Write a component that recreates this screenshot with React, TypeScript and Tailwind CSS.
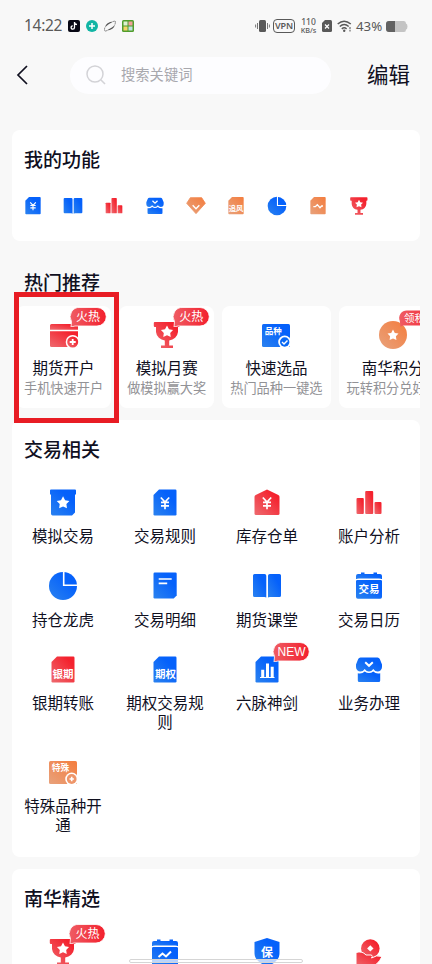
import React from "react";

type IconName =
  | "yenDoc" | "book" | "bars" | "shop" | "gem" | "zhuifeng" | "pie" | "wave" | "cup"
  | "wallet" | "pinzhong" | "coin" | "starBox" | "house" | "detail" | "calendar"
  | "yinqi" | "qiquan" | "chartDoc" | "teshu" | "trendCalendar" | "shield" | "hand";

type Item = {
  icon: IconName;
  label: string;
  badge?: string;
};

const STAR = "M15 9.6l1.8 3.3 3.7.7-2.6 2.7.5 3.7-3.4-1.6-3.4 1.6.5-3.7-2.6-2.7 3.7-.7z";
const DOC = "M9 1.5H25.3a1.2 1.2 0 0 1 1.2 1.2V26.3a1.2 1.2 0 0 1-1.2 1.2H4.7a1.2 1.2 0 0 1-1.2-1.2V7z";

const myItems: IconName[] = ["yenDoc", "book", "bars", "shop", "gem", "zhuifeng", "pie", "wave", "cup"];

const hotItems: (Item & { desc: string })[] = [
  { icon: "wallet", label: "期货开户", desc: "手机快速开户", badge: "火热" },
  { icon: "cup", label: "模拟月赛", desc: "做模拟赢大奖", badge: "火热" },
  { icon: "pinzhong", label: "快速选品", desc: "热门品种一键选" },
  { icon: "coin", label: "南华积分", desc: "玩转积分兑好礼", badge: "领积分" },
];

const tradeItems: Item[] = [
  { icon: "starBox", label: "模拟交易" },
  { icon: "yenDoc", label: "交易规则" },
  { icon: "house", label: "库存仓单" },
  { icon: "bars", label: "账户分析" },
  { icon: "pie", label: "持仓龙虎" },
  { icon: "detail", label: "交易明细" },
  { icon: "book", label: "期货课堂" },
  { icon: "calendar", label: "交易日历" },
  { icon: "yinqi", label: "银期转账" },
  { icon: "qiquan", label: "期权交易规则" },
  { icon: "chartDoc", label: "六脉神剑", badge: "NEW" },
  { icon: "shop", label: "业务办理" },
  { icon: "teshu", label: "特殊品种开通" },
];

// only the icons of this row are above the fold
const pickItems: Item[] = [
  { icon: "cup", label: "", badge: "火热" },
  { icon: "trendCalendar", label: "" },
  { icon: "shield", label: "" },
  { icon: "hand", label: "" },
];

const Gradients = () => (
  <svg className="absolute h-0 w-0">
    <defs>
      <linearGradient id="blue" x1="1" y1="0" x2="0" y2="1">
        <stop offset="0.3" stopColor="#0561fb" />
        <stop offset="1" stopColor="#2b82ef" />
      </linearGradient>
      <linearGradient id="red" x1="1" y1="0" x2="0" y2="1">
        <stop offset="0.2" stopColor="#f4222e" />
        <stop offset="1" stopColor="#ee6a6f" />
      </linearGradient>
      <linearGradient id="orange" x1="1" y1="0" x2="0" y2="1">
        <stop offset="0.1" stopColor="#f38043" />
        <stop offset="1" stopColor="#e8a27c" />
      </linearGradient>
      <linearGradient id="badge" x1="0" y1="0" x2="1" y2="0">
        <stop offset="0" stopColor="#ef5c64" />
        <stop offset="1" stopColor="#f3202d" />
      </linearGradient>
    </defs>
  </svg>
);

const Yen = () => (
  <path d="M10.8 9.5L15 14l4.2-4.5M11 14.3h8M11 17.8h8M15 14v7.2" fill="none" stroke="#fff" strokeWidth="1.7" />
);

const IconText = ({ x = 15, y, size = 10, children }: { x?: number; y: number; size?: number; children: string }) => (
  <text x={x} y={y} fontSize={size} fontWeight="700" fill="#fff" textAnchor="middle">{children}</text>
);

const CalendarBody = () => (
  <>
    <path d="M2 8V5a2 2 0 0 1 2-2h3V1.5h3.5V3h9V1.5H23V3h3a2 2 0 0 1 2 2v3z" fill="url(#blue)" />
    <path d="M2 9H28V26a1.8 1.8 0 0 1-1.8 1.8H3.8A1.8 1.8 0 0 1 2 26z" fill="url(#blue)" />
    <path d="M2 9.3q1-1.3 2.5-1.3h21q1.5 0 2.5 1.3" fill="none" stroke="#fff" />
  </>
);

const shapes: Record<IconName, React.ReactNode> = {
  yenDoc: <><path d={DOC} fill="url(#blue)" /><Yen /></>,
  book: (
    <>
      <path d="M2.5 3H12.5a1.8 1.8 0 0 1 1.8 1.8V26.5L12.5 26H2.5A1.5 1.5 0 0 1 1 24.5V4.5A1.5 1.5 0 0 1 2.5 3z" fill="url(#blue)" />
      <path d="M27.5 3H17.8a1.8 1.8 0 0 0-1.8 1.8V26.5l1.8-.5h9.7a1.5 1.5 0 0 0 1.5-1.5V4.5A1.5 1.5 0 0 0 27.5 3z" fill="url(#blue)" />
    </>
  ),
  bars: (
    <>
      <rect x="2.5" y="10" width="7.3" height="16" rx="1" fill="url(#red)" />
      <rect x="11.2" y="3" width="8" height="23" rx="1" fill="url(#red)" />
      <rect x="20.5" y="14" width="7" height="12" rx="1" fill="url(#red)" />
    </>
  ),
  shop: (
    <>
      <path d="M6.5 2.5h17a2.5 2.5 0 0 1 2.3 1.5L28 9.5v2.500a4.5 4.5 0 0 1-4.5 4.5q-2.5 0-4.2-2.5-1.8 2.5-4.3 2.5T10.7 14q-1.7 2.5-4.2 2.5A4.5 4.5 0 0 1 2 12V9.5L4.2 4a2.5 2.5 0 0 1 2.3-1.5z" fill="url(#blue)" />
      <path d="M3.8 18.2q4.2 1 6.9-1.8 4.3 3.2 8.6 0 2.7 2.8 6.9 1.8v7.3a1.5 1.5 0 0 1-1.5 1.5H5.3a1.5 1.5 0 0 1-1.5-1.5z" fill="url(#blue)" />
      <path d="M11.2 7.2l3.8 3.6 3.8-3.6" fill="none" stroke="#fff" strokeWidth="2" />
    </>
  ),
  gem: (
    <>
      <path d="M6.5 2.5h17L29 11 15 26.5 1 11z" fill="url(#orange)" stroke="url(#orange)" strokeWidth="1.2" strokeLinejoin="round" />
      <path d="M10 14l5 5 5-5" fill="none" stroke="#fff" strokeWidth="2.2" />
    </>
  ),
  zhuifeng: <><path d={DOC} fill="url(#orange)" /><IconText y={23} size={11}>追风</IconText></>,
  pie: (
    <>
      <circle cx="15" cy="15" r="14" fill="url(#blue)" />
      <path d="M15.7 0v14.3H30" fill="none" stroke="#fff" strokeWidth="1.6" />
    </>
  ),
  wave: (
    <>
      <path d={DOC} fill="url(#orange)" />
      <path d="M8 16h3l3-3 4 4.5 2.5-2.5h2" fill="none" stroke="#fff" strokeWidth="2" />
    </>
  ),
  cup: (
    <>
      <path d="M2.8 2H26.7a1 1 0 0 1 1 1v3a1 1 0 0 1-1 1h-.7v5a9.5 9.5 0 0 1-8.8 8.5v5h3.8V28H9v-2.5h3.8v-5A9.5 9.5 0 0 1 4 12V7h-1.2a1 1 0 0 1-1-1V3a1 1 0 0 1 1-1z" fill="url(#red)" />
      <path d={STAR} transform="translate(-1.5 -5) scale(1.1)" fill="#fff" />
    </>
  ),
  wallet: (
    <>
      <path d="M2.5 4h25A1.5 1.5 0 0 1 29 5.5V9.7H1V5.5A1.5 1.5 0 0 1 2.5 4z" fill="url(#red)" />
      <path d="M1 11.2H29V25.5a1.5 1.5 0 0 1-1.5 1.5h-25A1.5 1.5 0 0 1 1 25.5z" fill="url(#red)" />
      <circle cx="23.7" cy="22" r="7" fill="#fff" />
      <circle cx="23.7" cy="22" r="5.5" fill="url(#red)" />
      <path d="M20.7 22h6M23.7 19v6" stroke="#fff" strokeWidth="1.8" />
    </>
  ),
  pinzhong: (
    <>
      <rect x="1" y="4" width="28" height="23" rx="1.5" fill="url(#blue)" />
      <IconText x={12.3} y={14} size={8.5}>品种</IconText>
      <circle cx="23.7" cy="22" r="6.5" fill="#fff" />
      <circle cx="23.7" cy="22" r="4.7" fill="#0968f5" />
      <path d="M21 22l2 2 3.5-3.6" fill="none" stroke="#fff" strokeWidth="1.4" />
    </>
  ),
  coin: (
    <>
      <circle cx="15" cy="15" r="14" fill="url(#orange)" />
      <path d={STAR} fill="#fff" />
    </>
  ),
  starBox: (
    <>
      <path d="M3 1.5H27a1 1 0 0 1 1 1v4h-1V24.5l-3 3H5A1.8 1.8 0 0 1 3 25.8V6.5H2v-4a1 1 0 0 1 1-1z" fill="url(#blue)" />
      <path d={STAR} transform="translate(-2.2 -2.7) scale(1.15)" fill="#fff" />
    </>
  ),
  house: (
    <>
      <path d="M15 1.5L26.3 7q1.2.6 1.2 1.8V25.5a1.5 1.5 0 0 1-1.5 1.5H4a1.5 1.5 0 0 1-1.5-1.5V8.8q0-1.2 1.2-1.8z" fill="url(#red)" />
      <Yen />
    </>
  ),
  detail: (
    <>
      <path d="M4.7 1.5H25.5a1.2 1.2 0 0 1 1.2 1.2V24.5l-3 3H4.7a1.2 1.2 0 0 1-1.2-1.2V2.7a1.2 1.2 0 0 1 1.2-1.2z" fill="url(#blue)" />
      <path d="M8.7 8h13M8.7 12.3h8.5" stroke="#fff" strokeWidth="1.7" />
    </>
  ),
  calendar: <><CalendarBody /><IconText y={22} size={10.5}>交易</IconText></>,
  yinqi: <><path d={DOC} fill="url(#red)" /><IconText y={22.5} size={10.5}>银期</IconText></>,
  qiquan: <><path d={DOC} fill="url(#blue)" /><IconText x={15.5} y={22.5} size={10.5}>期权</IconText></>,
  chartDoc: (
    <>
      <path d={DOC} fill="url(#blue)" />
      <path d="M10.7 14.8v8M15.5 8.5v14.3M20.2 11.8v11" stroke="#fff" strokeWidth="3" />
      <path d="M8 22.5h14.5" stroke="#fff" />
    </>
  ),
  teshu: (
    <>
      <rect x="1" y="4" width="28" height="23" rx="1.5" fill="url(#orange)" />
      <IconText x={12.5} y={14} size={8.7}>特殊</IconText>
      <circle cx="23.7" cy="22" r="6.5" fill="#fff" />
      <circle cx="23.7" cy="22" r="4.9" fill="#ee9569" />
      <path d="M21.5 22h4.400M23.7 19.8v4.4" stroke="#fff" strokeWidth="1.6" />
    </>
  ),
  trendCalendar: (
    <>
      <g transform="translate(0 1)"><CalendarBody /></g>
      <path d="M8.5 20l4-3.5 3.5 3 5-5" fill="none" stroke="#fff" strokeWidth="2" />
    </>
  ),
  shield: (
    <>
      <path d="M15 1L27.5 5V16c0 6.5-5 10.5-12.5 13.5C7.5 26 2.5 22.5 2.5 16V5z" fill="url(#blue)" />
      <IconText x={15} y={19.5} size={12}>保</IconText>
    </>
  ),
  hand: (
    <>
      <circle cx="16.3" cy="11.5" r="9.3" fill="url(#red)" />
      <path d="M16.3 8.2l3.2 3.2-3.2 3.2-3.2-3.2z" fill="#fff" />
      <path d="M2 15.5q6-2 10 2.5h5.5q1.5 1.5 0 3 5-3.5 10.5-1.5-4 8.5-11 10.5H2z" fill="url(#red)" stroke="#fff" />
    </>
  ),
};

const Icon = ({ name, small }: { name: IconName; small?: boolean }) => (
  <svg viewBox="0 0 30 30" className={small ? "size-5 shrink-0" : "size-[30px] shrink-0"}>
    {shapes[name]}
  </svg>
);

const Badge = ({ text }: { text: string }) => {
  if (text == "领积分") {
    return (
      <div className="absolute -top-[10px] left-[21px] flex h-[17px] w-[42px] items-center justify-center">
        <svg viewBox="0 0 42 17" className="absolute inset-0 h-full w-full">
          <path d="M8 .5H34a7.5 7.5 0 0 1 0 15H4L1.500 16.8 .8 11A7.5 7.5 0 0 1 8 .5z" fill="url(#badge)" />
        </svg>
        <span className="relative -mt-px text-[10.5px] leading-none whitespace-nowrap text-white">{text}</span>
      </div>
    );
  }
  return (
    <div className="absolute -top-[13px] left-[21px] flex h-5 w-[38px] items-center justify-center">
      <svg viewBox="0 0 38 20" className="absolute inset-0 h-full w-full">
        <path d="M10 .5H27a9.2 9.2 0 0 1 0 18.5H5L1 20 1.500 14.500A9.2 9.2 0 0 1 10 .5z" fill="url(#badge)" stroke="#fff" strokeWidth="0.8" />
      </svg>
      <span className="relative mr-px font-['Liberation_Sans','Noto_Sans_CJK_SC',sans-serif] text-[12px] leading-none whitespace-nowrap text-white">
        {text}
      </span>
    </div>
  );
};

const SectionTitle = ({ children }: { children: string }) => (
  <h2 className="pb-0.5 text-[19px] leading-[26px] font-medium text-[#10101f]">{children}</h2>
);

const ItemGrid = ({ items }: { items: Item[] }) => (
  <div className="grid grid-cols-4 gap-y-[26px]">
    {items.map((item) => (
      <div key={item.icon} className="flex flex-col items-center">
        <div className="relative h-[30px]">
          <Icon name={item.icon} />
          {item.badge && <Badge text={item.badge} />}
        </div>
        <div className="mt-[8.5px] w-[80px] text-center text-[15.5px] leading-[19px] text-[#10101f]">
          {item.label}
        </div>
      </div>
    ))}
  </div>
);

const StatusBar = () => (
  <div className="flex h-[52px] items-center justify-between pr-6 pl-6 font-['Noto_Sans'] text-[#595959]">
    <div className="flex items-center gap-1.5">
      <span className="w-[38px] text-[15.5px] tracking-[-0.3px]">14:22</span>
      <svg viewBox="0 0 12 12" className="size-3">
        <rect width="12" height="12" rx="2" fill="#080814" />
        <path d="M6.5 2v5.5a1.7 1.7 0 1 1-1.7-1.7M6.5 2.3q.5 2 2.5 2.2" fill="none" stroke="#fff" strokeWidth="1.3" />
      </svg>
      <svg viewBox="0 0 12 12" className="size-3">
        <circle cx="6" cy="6" r="6" fill="#12b5a4" />
        <path d="M3 6h6M6 3v6" stroke="#fff" strokeWidth="1.5" />
      </svg>
      <svg viewBox="0 0 12 12" className="size-3">
        <path d="M1 7.5Q2 2 9.500 1.500L5 4Q2.500 5.500 1 7.500z" fill="#555" />
        <path d="M11 4.500Q10 10 2.500 10.500L7 8Q9.500 6.500 11 4.500z" fill="#555" />
        <path d="M.8 7.500Q0 10 .8 10.800T3 10.500M9 1.500Q11.500.8 11.500 1.500T11 4.500" fill="none" stroke="#777" strokeWidth="0.800" />
      </svg>
      <svg viewBox="0 0 12 12" className="size-3">
        <rect width="12" height="12" rx="1.5" fill="#519d2c" />
        <rect x="1.5" y="1.5" width="4" height="4" fill="#dff0d0" />
        <rect x="6.5" y="1.5" width="4" height="4" fill="#f2a09a" />
        <rect x="1.5" y="6.5" width="4" height="4" fill="#f5d36a" />
        <rect x="6.5" y="6.5" width="4" height="4" fill="#bfe3e0" />
      </svg>
    </div>
    <div className="flex items-center">
      <svg viewBox="0 0 15 12" className="h-3 w-[15px]">
        <rect x="4" y="0" width="7" height="12" rx="1.5" fill="#595959" />
        <path d="M2.5 3v6M12.5 3v6M.6 4.5v3M14.4 4.5v3" stroke="#777" />
      </svg>
      <span className="ml-[3px] flex h-[14px] w-[22px] items-center justify-center rounded-[4px] border border-[#595959] text-[9px] font-semibold tracking-[-0.2px]">VPN</span>
      <span className="ml-1 flex w-[19px] flex-col items-center text-[8.5px] leading-[8px] font-medium">
        <span>110</span>
        <span className="text-[7.3px]">KB/s</span>
      </span>
      <svg viewBox="0 0 10 12" className="ml-1 h-3 w-2.5">
        <path d="M3 0h5.5A1.5 1.5 0 0 1 10 1.5v9A1.5 1.5 0 0 1 8.5 12h-7A1.5 1.5 0 0 1 0 10.5V3z" fill="#595959" />
        <path d="M3 4.5l4 4M7 4.5l-4 4" stroke="#fff" strokeWidth="1.2" />
      </svg>
      <svg viewBox="0 0 15 12" className="ml-[5px] h-3 w-[15px]">
        <path d="M.7 4Q7 -1.5 13.8 4M2.8 6.5Q7.2 2.5 11.7 6.5M4.8 8.8q2.4-2 4.8 0" fill="none" stroke="#595959" strokeWidth="1.5" />
        <circle cx="7.2" cy="10.8" r="1.2" fill="#595959" />
        <path d="M13 7v4.5" stroke="#777" strokeWidth="1.3" strokeDasharray="2 .8" />
      </svg>
      <span className="ml-1 w-[27px] text-[13.3px] leading-5">43%</span>
      <svg viewBox="0 0 22 11" className="ml-[3px] h-[11px] w-[22px]">
        <path d="M3 0h15q2 0 2 2.5 1.5.5 1.5 3t-1.5 3Q20 11 18 11H3Q0 11 0 8V3Q0 0 3 0z" fill="#c4c4c4" />
        <path d="M3 0h6v11H3Q0 11 0 8V3Q0 0 3 0z" fill="#626262" />
      </svg>
    </div>
  </div>
);

const Header = () => (
  <div className="flex h-[46px] items-center px-4">
    <svg viewBox="0 0 12 20" className="h-5 w-3">
      <path d="M11 1L2 10l9 9" fill="none" stroke="#10101f" strokeWidth="1.7" />
    </svg>
    <div className="ml-[42px] flex h-[37px] w-[261px] items-center rounded-full bg-[#fdfdff] pl-4">
      <svg viewBox="0 0 20 20" className="size-5">
        <circle cx="9" cy="9" r="8" fill="none" stroke="#d3d3d7" strokeWidth="1.5" />
        <path d="M15 15l4 4" stroke="#d3d3d7" strokeWidth="1.6" />
      </svg>
      <span className="-mt-0.5 ml-[15px] text-[14.3px] text-[#a8a8ae]">搜索关键词</span>
    </div>
    <span className="-mt-0.5 ml-9 text-[21.5px] whitespace-nowrap text-[#10101f]">编辑</span>
  </div>
);

export default function App() {
  return (
    <div className="relative h-[964px] w-[432px] overflow-hidden bg-[#f8f8f8] font-['Noto_Sans_CJK_SC',sans-serif]">
      <Gradients />
      <StatusBar />
      <Header />

      <section className="mx-3 mt-8 h-[111px] rounded-lg bg-white px-3 pt-4">
        <SectionTitle>我的功能</SectionTitle>
        <div className="mt-[22px] -ml-[1.5px] flex gap-[20.8px]">
          {myItems.map((name) => (
            <Icon key={name} name={name} small />
          ))}
        </div>
      </section>

      <div className="mx-3 mt-7 h-[151px]">
        <div className="px-3">
          <SectionTitle>热门推荐</SectionTitle>
        </div>
        <div className="mt-[9px] flex gap-2 overflow-hidden pl-1">
          {hotItems.map((item) => (
            <div key={item.label} className="flex h-[102px] shrink-0 flex-col items-center rounded-lg bg-white px-2 pt-[14px]">
              <div className="relative h-[30px]">
                <Icon name={item.icon} />
                {item.badge && <Badge text={item.badge} />}
              </div>
              <div className="mt-2 text-[15.5px] leading-[19px] text-[#10101f]">{item.label}</div>
              <div className="mt-0.5 text-[13.2px] leading-[18px] text-[#929296]">{item.desc}</div>
            </div>
          ))}
        </div>
      </div>

      <section className="mx-3 h-[437px] rounded-lg bg-white pt-4">
        <div className="mb-[23.7px] px-3">
          <SectionTitle>交易相关</SectionTitle>
        </div>
        <ItemGrid items={tradeItems} />
      </section>

      <section className="mx-3 mt-3 h-[200px] rounded-lg bg-white pt-4">
        <div className="mb-6 px-3">
          <SectionTitle>南华精选</SectionTitle>
        </div>
        <ItemGrid items={pickItems} />
      </section>

      {/* highlight around the account opening card */}
      <div className="absolute top-[292px] left-[14px] h-[131px] w-[105px] border-[5px] border-[#e81c24]" />
      <div className="absolute top-[959px] left-[129px] h-1 w-[174px] rounded-full border border-[#d5d5d5] bg-white/70" />
    </div>
  );
}
